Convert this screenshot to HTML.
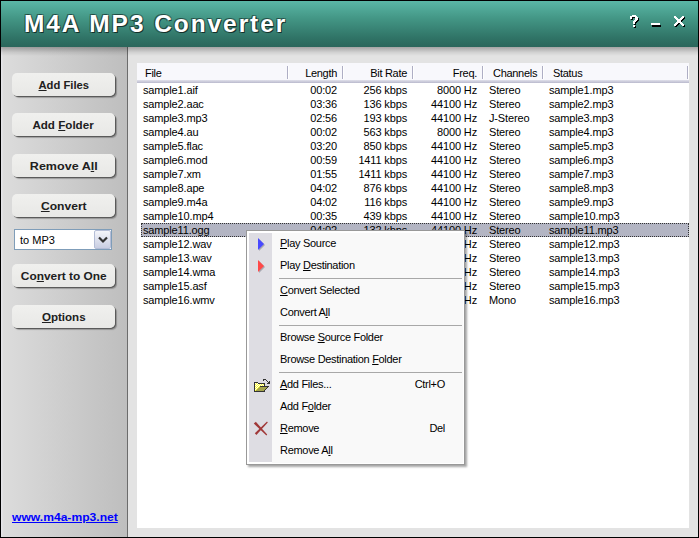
<!DOCTYPE html>
<html><head><meta charset="utf-8">
<style>
*{margin:0;padding:0;box-sizing:border-box}
html,body{width:699px;height:538px;overflow:hidden;background:#000}
body{position:relative;font-family:"Liberation Sans",sans-serif;font-size:11px;color:#000}
.abs{position:absolute}
#title{left:1px;top:1px;width:697px;height:46px;background:linear-gradient(#5ab7a6,#439685 38%,#2f7265 82%,#2a665b)}
#ttl{left:24px;top:11px;font-size:23.3px;font-weight:bold;color:#fff;white-space:nowrap;letter-spacing:1.85px;transform-origin:0 0;transform:scaleX(1.05);text-shadow:-1px -1px 0 rgba(20,40,35,.55),1px -1px 0 rgba(20,40,35,.35),-1px 1px 0 rgba(20,40,35,.35),1px 1px 0 rgba(0,0,0,.6)}
#left{left:1px;top:47px;width:126px;height:490px;background:linear-gradient(90deg,#e4e4e8 0,#e4e4e8 1px,#dcdcdc 2px,#cdcdcd 50%,#bebebe)}
#ldiv{left:127px;top:47px;width:1px;height:490px;background:#6c6c6c}
#right{left:128px;top:47px;width:570px;height:490px;background:#e3e3e3}
.shadow{left:1px;top:47px;width:697px;height:9px;background:linear-gradient(rgba(0,0,0,.28),rgba(0,0,0,.08) 60%,rgba(0,0,0,0))}
.btn{position:absolute;left:12px;width:103px;height:23px;border-radius:5px;background:linear-gradient(#f0f0ee,#e8e8e6);box-shadow:1px 1px 0 #5a5a5a,2px 2px 1px rgba(0,0,0,.25);font-weight:bold;color:#202020;text-align:center;line-height:25px;font-size:11px;white-space:nowrap}
.btn u{text-decoration:underline}
#combo{left:14px;top:229px;width:98px;height:21px;border:1px solid #7f9db9;background:#fff}
#combo span{position:absolute;left:5px;top:4px;line-height:13px}
#dd{left:79px;top:0px;width:17px;height:19px;border:1px solid #b4bdd6;border-radius:2px;background:linear-gradient(#f4f5fa,#c9cee2)}
#link{left:12px;top:511px;font-weight:bold;color:#0000ff;text-decoration:underline;white-space:nowrap;transform-origin:0 0;transform:scaleX(1.1)}
#list{left:137px;top:63px;width:552px;height:465px;background:#fff;overflow:hidden}
#hdr{left:0;top:0;width:552px;height:20px;background:#f8f8fc}
#hdrb{left:0;top:17px;width:552px;height:3px;background:linear-gradient(#e0e0ea,#cdcddc,#b9b9cc)}
.sep{position:absolute;top:3px;width:2px;height:13px;border-left:1px solid #aeaec4;border-right:1px solid #fff}
.h{position:absolute;top:4px;line-height:13px;white-space:nowrap;letter-spacing:-.3px}
.row{position:absolute;left:0;width:552px;height:14px}
.row span{position:absolute;top:1px;line-height:13px;white-space:nowrap;letter-spacing:-.15px}
.c1{left:6px}
.c2{right:352px}
.c3{right:282px}
.c4{right:212px}
.c5{left:352px}
.c6{left:412px}
.selbg{position:absolute;left:4px;width:548px;height:14px;background:#b3b5c3;outline:1px dotted #333;outline-offset:-1px}
#menu{left:246px;top:230px;width:219px;height:235px;background:#fff;border:1px solid #999;box-shadow:2px 2px 2px rgba(0,0,0,.35)}
#mcont{left:25px;top:2px;width:191px;height:230px;background:#f9f9f9}
#mcol{left:2px;top:2px;width:23px;height:229px;background:#dedde3}
.mi{position:absolute;left:33px;line-height:13px;white-space:nowrap;letter-spacing:-.3px}
.sc{position:absolute;right:19px;line-height:13px;white-space:nowrap;letter-spacing:-.3px}
.msep{position:absolute;left:32px;width:183px;height:1px;background:#a8a8a8}
</style></head><body>
<div id="title" class="abs"></div>
<div id="ttl" class="abs">M4A MP3 Converter</div>
<!-- title buttons -->
<svg class="abs" style="left:620px;top:10px" width="79" height="25" viewBox="0 0 79 25" shape-rendering="crispEdges"><g fill="#000"><rect x="13" y="6" width="4" height="1"/><rect x="11" y="7" width="7" height="1"/><rect x="11" y="8" width="2" height="1"/><rect x="16" y="8" width="3" height="1"/><rect x="11" y="9" width="2" height="1"/><rect x="16" y="9" width="3" height="1"/><rect x="16" y="10" width="3" height="1"/><rect x="15" y="11" width="3" height="1"/><rect x="14" y="12" width="3" height="1"/><rect x="14" y="13" width="2" height="1"/><rect x="14" y="14" width="2" height="1"/><rect x="14" y="16" width="2" height="1"/><rect x="14" y="17" width="2" height="1"/><rect x="55" y="7" width="2" height="1"/><rect x="63" y="7" width="2" height="1"/><rect x="55" y="8" width="3" height="1"/><rect x="62" y="8" width="3" height="1"/><rect x="56" y="9" width="3" height="1"/><rect x="61" y="9" width="3" height="1"/><rect x="57" y="10" width="6" height="1"/><rect x="58" y="11" width="4" height="1"/><rect x="58" y="12" width="4" height="1"/><rect x="57" y="13" width="6" height="1"/><rect x="56" y="14" width="3" height="1"/><rect x="61" y="14" width="3" height="1"/><rect x="55" y="15" width="3" height="1"/><rect x="62" y="15" width="3" height="1"/><rect x="55" y="16" width="2" height="1"/><rect x="63" y="16" width="2" height="1"/><rect x="32" y="15" width="9" height="2"/></g><g fill="#fff"><rect x="12" y="5" width="4" height="1"/><rect x="10" y="6" width="7" height="1"/><rect x="10" y="7" width="2" height="1"/><rect x="15" y="7" width="3" height="1"/><rect x="10" y="8" width="2" height="1"/><rect x="15" y="8" width="3" height="1"/><rect x="15" y="9" width="3" height="1"/><rect x="14" y="10" width="3" height="1"/><rect x="13" y="11" width="3" height="1"/><rect x="13" y="12" width="2" height="1"/><rect x="13" y="13" width="2" height="1"/><rect x="13" y="15" width="2" height="1"/><rect x="13" y="16" width="2" height="1"/><rect x="54" y="6" width="2" height="1"/><rect x="62" y="6" width="2" height="1"/><rect x="54" y="7" width="3" height="1"/><rect x="61" y="7" width="3" height="1"/><rect x="55" y="8" width="3" height="1"/><rect x="60" y="8" width="3" height="1"/><rect x="56" y="9" width="6" height="1"/><rect x="57" y="10" width="4" height="1"/><rect x="57" y="11" width="4" height="1"/><rect x="56" y="12" width="6" height="1"/><rect x="55" y="13" width="3" height="1"/><rect x="60" y="13" width="3" height="1"/><rect x="54" y="14" width="3" height="1"/><rect x="61" y="14" width="3" height="1"/><rect x="54" y="15" width="2" height="1"/><rect x="62" y="15" width="2" height="1"/><rect x="31" y="13" width="9" height="2"/></g></svg>
<div id="left" class="abs"></div>
<div id="ldiv" class="abs"></div>
<div id="right" class="abs"></div>
<div class="abs shadow"></div>

<div class="btn" style="top:73px"><span style="display:inline-block;transform:scaleX(1.02)"><u>A</u>dd Files</span></div>
<div class="btn" style="top:113px"><span style="display:inline-block;transform:scaleX(1.055)">Add <u>F</u>older</span></div>
<div class="btn" style="top:154px"><span style="display:inline-block;transform:scaleX(1.14)">Remove A<u>l</u>l</span></div>
<div class="btn" style="top:194px"><span style="display:inline-block;transform:scaleX(1.1)"><u>C</u>onvert</span></div>
<div id="combo" class="abs"><span>to MP3</span>
  <div id="dd" class="abs">
    <svg class="abs" style="left:3px;top:5px" width="10" height="8" viewBox="0 0 10 8"><path d="M1 1.5l4 4 4-4" fill="none" stroke="#333" stroke-width="2.2"/></svg>
  </div>
</div>
<div class="btn" style="top:264px"><span style="display:inline-block;transform:scaleX(1.08)">Co<u>n</u>vert to One</span></div>
<div class="btn" style="top:305px"><span style="display:inline-block;transform:scaleX(1.05)"><u>O</u>ptions</span></div>
<div id="link" class="abs">www.m4a-mp3.net</div>

<div id="list" class="abs">
  <div id="hdr" class="abs"></div>
  <div id="hdrb" class="abs"></div>
  <span class="h" style="left:8px">File</span>
  <div class="sep" style="left:150px"></div>
  <span class="h" style="right:352px">Length</span>
  <div class="sep" style="left:205px"></div>
  <span class="h" style="right:282px">Bit Rate</span>
  <div class="sep" style="left:275px"></div>
  <span class="h" style="right:212px">Freq.</span>
  <div class="sep" style="left:345px"></div>
  <span class="h" style="left:356px">Channels</span>
  <div class="sep" style="left:405px"></div>
  <span class="h" style="left:416px">Status</span>
  <div class="sep" style="left:550px"></div>
  <div class="row" style="top:20px"><span class="c1">sample1.aif</span><span class="c2">00:02</span><span class="c3">256 kbps</span><span class="c4">8000 Hz</span><span class="c5">Stereo</span><span class="c6">sample1.mp3</span></div>
<div class="row" style="top:34px"><span class="c1">sample2.aac</span><span class="c2">03:36</span><span class="c3">136 kbps</span><span class="c4">44100 Hz</span><span class="c5">Stereo</span><span class="c6">sample2.mp3</span></div>
<div class="row" style="top:48px"><span class="c1">sample3.mp3</span><span class="c2">02:56</span><span class="c3">193 kbps</span><span class="c4">44100 Hz</span><span class="c5">J-Stereo</span><span class="c6">sample3.mp3</span></div>
<div class="row" style="top:62px"><span class="c1">sample4.au</span><span class="c2">00:02</span><span class="c3">563 kbps</span><span class="c4">8000 Hz</span><span class="c5">Stereo</span><span class="c6">sample4.mp3</span></div>
<div class="row" style="top:76px"><span class="c1">sample5.flac</span><span class="c2">03:20</span><span class="c3">850 kbps</span><span class="c4">44100 Hz</span><span class="c5">Stereo</span><span class="c6">sample5.mp3</span></div>
<div class="row" style="top:90px"><span class="c1">sample6.mod</span><span class="c2">00:59</span><span class="c3">1411 kbps</span><span class="c4">44100 Hz</span><span class="c5">Stereo</span><span class="c6">sample6.mp3</span></div>
<div class="row" style="top:104px"><span class="c1">sample7.xm</span><span class="c2">01:55</span><span class="c3">1411 kbps</span><span class="c4">44100 Hz</span><span class="c5">Stereo</span><span class="c6">sample7.mp3</span></div>
<div class="row" style="top:118px"><span class="c1">sample8.ape</span><span class="c2">04:02</span><span class="c3">876 kbps</span><span class="c4">44100 Hz</span><span class="c5">Stereo</span><span class="c6">sample8.mp3</span></div>
<div class="row" style="top:132px"><span class="c1">sample9.m4a</span><span class="c2">04:02</span><span class="c3">116 kbps</span><span class="c4">44100 Hz</span><span class="c5">Stereo</span><span class="c6">sample9.mp3</span></div>
<div class="row" style="top:146px"><span class="c1">sample10.mp4</span><span class="c2">00:35</span><span class="c3">439 kbps</span><span class="c4">44100 Hz</span><span class="c5">Stereo</span><span class="c6">sample10.mp3</span></div>
<div class="selbg" style="top:160px"></div><div class="row" style="top:160px"><span class="c1">sample11.ogg</span><span class="c2">04:02</span><span class="c3">132 kbps</span><span class="c4">44100 Hz</span><span class="c5">Stereo</span><span class="c6">sample11.mp3</span></div>
<div class="row" style="top:174px"><span class="c1">sample12.wav</span><span class="c2">04:02</span><span class="c3">132 kbps</span><span class="c4">44100 Hz</span><span class="c5">Stereo</span><span class="c6">sample12.mp3</span></div>
<div class="row" style="top:188px"><span class="c1">sample13.wav</span><span class="c2">04:02</span><span class="c3">132 kbps</span><span class="c4">44100 Hz</span><span class="c5">Stereo</span><span class="c6">sample13.mp3</span></div>
<div class="row" style="top:202px"><span class="c1">sample14.wma</span><span class="c2">04:02</span><span class="c3">132 kbps</span><span class="c4">44100 Hz</span><span class="c5">Stereo</span><span class="c6">sample14.mp3</span></div>
<div class="row" style="top:216px"><span class="c1">sample15.asf</span><span class="c2">04:02</span><span class="c3">132 kbps</span><span class="c4">44100 Hz</span><span class="c5">Stereo</span><span class="c6">sample15.mp3</span></div>
<div class="row" style="top:230px"><span class="c1">sample16.wmv</span><span class="c2">04:02</span><span class="c3">132 kbps</span><span class="c4">44100 Hz</span><span class="c5">Mono</span><span class="c6">sample16.mp3</span></div>
</div>

<div id="menu" class="abs">
  <div id="mcont" class="abs"></div>
  <div id="mcol" class="abs"></div>
  <svg class="abs" style="left:10px;top:6px" width="10" height="14" viewBox="0 0 10 14"><path d="M2 2l6 6-6 6z" fill="#a8a8b0"/><path d="M1 1l6 6-6 6z" fill="#4848ff"/></svg>
  <svg class="abs" style="left:10px;top:28px" width="10" height="14" viewBox="0 0 10 14"><path d="M2 2l6 6-6 6z" fill="#a8a8b0"/><path d="M1 1l6 6-6 6z" fill="#ff4848"/></svg>

  <svg class="abs" style="left:5px;top:145px" width="20" height="18" viewBox="0 0 20 18" shape-rendering="crispEdges">
    <defs><pattern id="chk" width="2" height="2" patternUnits="userSpaceOnUse"><rect width="2" height="2" fill="#ffff30"/><rect width="1" height="1" fill="#fffff0"/><rect x="1" y="1" width="1" height="1" fill="#fffff0"/></pattern></defs>
    <rect x="3" y="7" width="9" height="8" fill="url(#chk)"/>
    <rect x="3" y="6" width="3" height="1" fill="#333"/>
    <rect x="2" y="6" width="1" height="10" fill="#333"/>
    <rect x="6" y="7" width="7" height="1" fill="#333"/>
    <rect x="12" y="7" width="1" height="4" fill="#333"/>
    <rect x="2" y="15" width="11" height="1" fill="#333"/>
    <path d="M7 10h10v1h-1v1h-1v1h-1v1h-1v1h-1v1h-9v-1h1v-1h1v-1h1v-1h1v-1h1z" fill="#333"/>
    <path d="M8 11h7v1h-1v1h-1v1h-1v1h-8v-1h1v-1h1v-1h1v-1h1z" fill="#a4a44c"/>
    <path d="M10 4h1v-1h3v1h1v1h1v1h1v-1h1v3h-3v-1h1v-1h-1v-1h-1v-1h-2v1h-1z" fill="#333"/>
  </svg>
  <svg class="abs" style="left:5px;top:189px" width="18" height="18" viewBox="0 0 18 18">
    <path d="M1.8 3.6 L3.8 1.8 L15.2 14.4 L14.4 15.4 Z" fill="#a03838"/>
    <path d="M15.8 2.4 L15 1.6 L2.8 13.2 L4.4 15 Z" fill="#a03838"/>
  </svg>
  <span class="mi" style="top:6px"><u>P</u>lay Source</span>
  <span class="mi" style="top:28px">Play <u>D</u>estination</span>
  <div class="msep" style="top:47px"></div>
  <span class="mi" style="top:53px"><u>C</u>onvert Selected</span>
  <span class="mi" style="top:75px">Convert A<u>l</u>l</span>
  <div class="msep" style="top:94px"></div>
  <span class="mi" style="top:100px">Browse <u>S</u>ource Folder</span>
  <span class="mi" style="top:122px">Browse Destination <u>F</u>older</span>
  <div class="msep" style="top:141px"></div>
  <span class="mi" style="top:147px"><u>A</u>dd Files...</span><span class="sc" style="top:147px">Ctrl+O</span>
  <span class="mi" style="top:169px">Add F<u>o</u>lder</span>
  <span class="mi" style="top:191px"><u>R</u>emove</span><span class="sc" style="top:191px">Del</span>
  <span class="mi" style="top:213px">Remove A<u>l</u>l</span>
</div>
</body></html>
